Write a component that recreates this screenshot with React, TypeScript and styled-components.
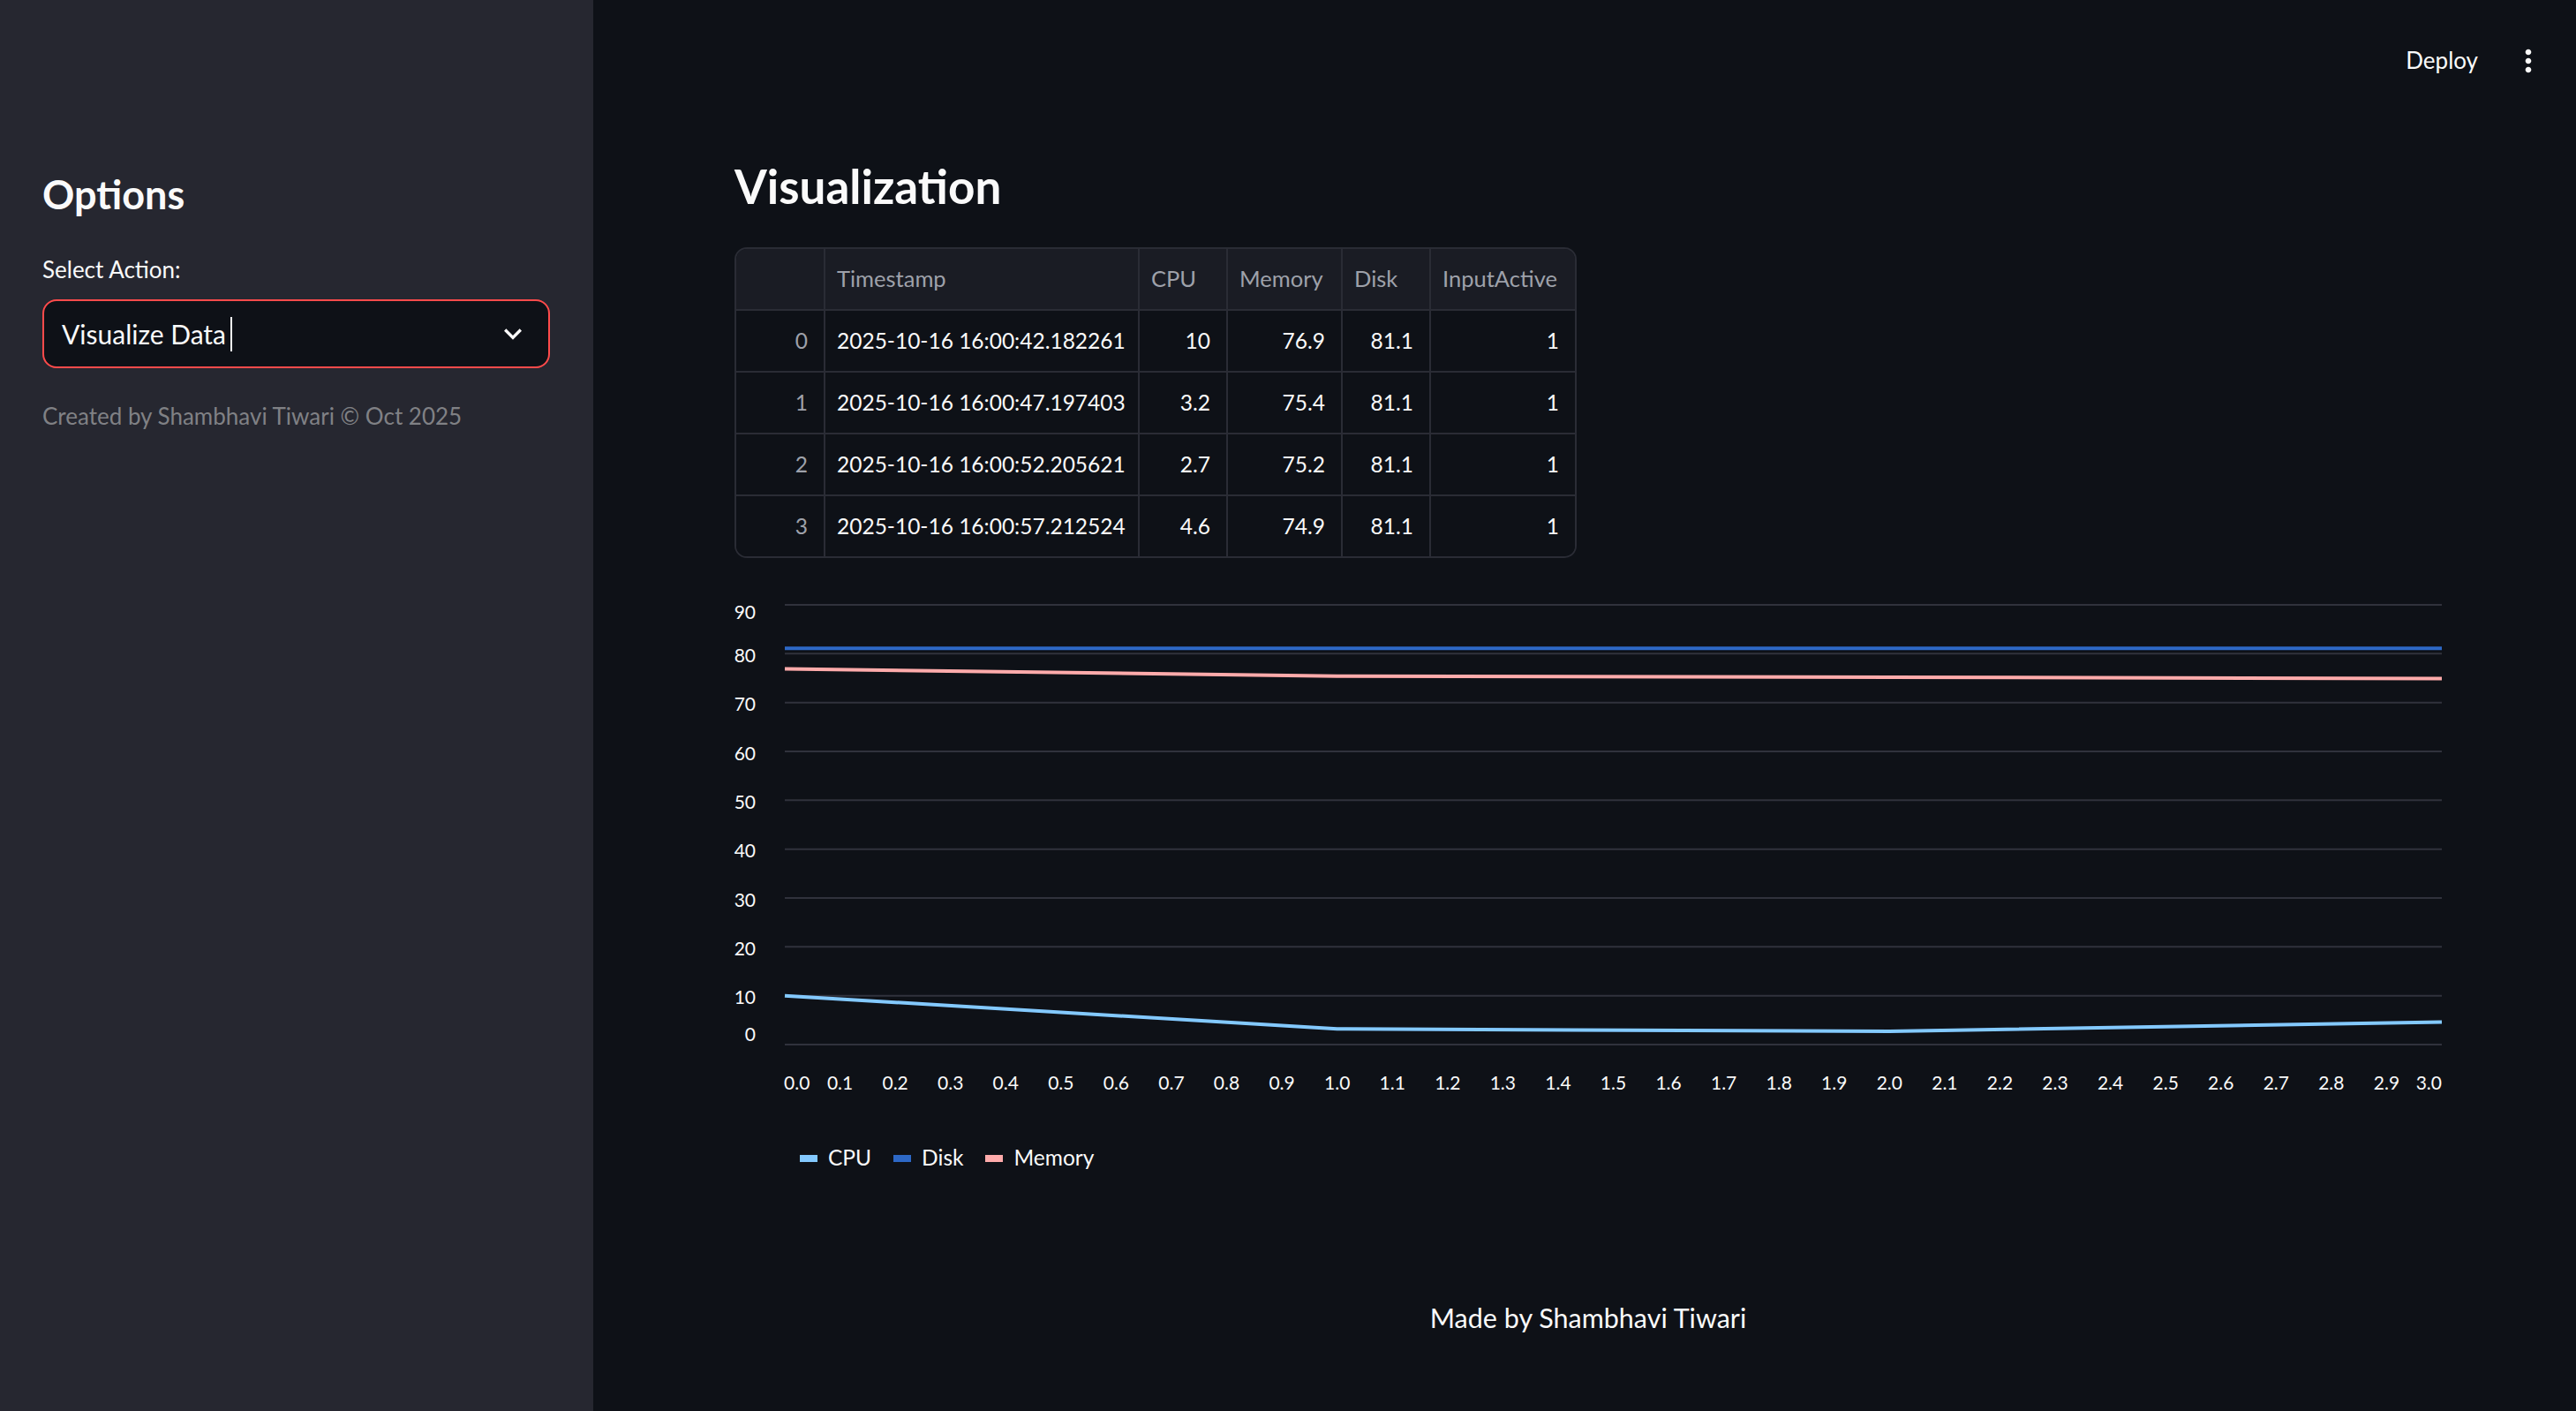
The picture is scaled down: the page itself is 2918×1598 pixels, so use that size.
import React from "react";
import styled, { createGlobalStyle } from "styled-components";

const GlobalStyle = createGlobalStyle`
  html, body {
    margin: 0;
    padding: 0;
    background: #0e1117;
    color: #fafafa;
    font-family: "Lato", "Noto Sans", sans-serif;
  }
  * { box-sizing: border-box; }
`;

const Shell = styled.div`
  display: flex;
  min-height: 100vh;
  width: 100%;
`;

const Sidebar = styled.aside`
  width: 672px;
  flex: 0 0 672px;
  background: #262730;
  padding: 193px 48px 0 48px;
  display: flex;
  flex-direction: column;
`;

const SidebarTitle = styled.h2`
  margin: 0;
  font-size: 45px;
  line-height: 1.2;
  font-weight: 700;
  color: #fafafa;
`;

const FieldLabel = styled.label`
  margin-top: 43px;
  font-size: 26px;
  line-height: 1.2;
  color: #fafafa;
`;

const SelectBox = styled.div`
  margin-top: 18px;
  height: 78px;
  width: 575px;
  border: 2px solid #ff4b4b;
  border-radius: 16px;
  background: #0e1117;
  display: flex;
  align-items: center;
  padding: 0 20px 0 20px;
`;

const SelectValue = styled.span`
  font-size: 30px;
  line-height: 1.2;
  color: #fafafa;
`;

const Caret = styled.span`
  display: inline-block;
  width: 2px;
  height: 39px;
  margin-left: 5px;
  background: #fafafa;
`;

const Spacer = styled.div`
  flex: 1;
`;

const Caption = styled.p`
  margin: 39px 0 0 0;
  font-size: 26px;
  line-height: 1.2;
  color: #808185;
`;

const Main = styled.main`
  flex: 1;
  display: flex;
  flex-direction: column;
  min-width: 0;
`;

const TopBar = styled.header`
  height: 137px;
  display: flex;
  justify-content: flex-end;
  align-items: center;
  gap: 37px;
  padding-right: 34px;
`;

const DeployButton = styled.button`
  background: transparent;
  border: none;
  padding: 0;
  color: #fafafa;
  font-family: inherit;
  font-size: 26px;
  line-height: 1.2;
`;

const IconButton = styled.button`
  background: transparent;
  border: none;
  padding: 0;
  width: 40px;
  height: 40px;
  display: flex;
  align-items: center;
  justify-content: center;
  color: #fafafa;
`;

const Content = styled.section`
  padding: 0 152px 0 160px;
  display: flex;
  flex-direction: column;
`;

const PageTitle = styled.h3`
  margin: 42px 0 0 0;
  font-size: 53px;
  line-height: 1.2;
  font-weight: 700;
  color: #fafafa;
`;

const TableFrame = styled.div`
  margin-top: 37px;
  align-self: flex-start;
  display: grid;
  grid-template-columns: 101px 356px 100px 130px 100px 163px;
  border: 2px solid #2a2c35;
  border-radius: 14px;
  overflow: hidden;
`;

const Cell = styled.div<{ $head?: boolean; $right?: boolean; $muted?: boolean; $lastCol?: boolean; $lastRow?: boolean }>`
  height: ${(p) => (p.$lastRow ? "68px" : "70px")};
  display: flex;
  align-items: center;
  justify-content: ${(p) => (p.$right ? "flex-end" : "flex-start")};
  padding: 0 18px 0 13px;
  font-size: ${(p) => (p.$head ? "25.5px" : "24.5px")};
  line-height: 1.2;
  white-space: nowrap;
  background: ${(p) => (p.$head ? "#1a1c24" : "#0e1117")};
  color: ${(p) => (p.$head || p.$muted ? "#9ea1aa" : "#fafafa")};
  border-right: ${(p) => (p.$lastCol ? "none" : "2px solid #2a2c35")};
  border-bottom: ${(p) => (p.$lastRow ? "none" : "2px solid #2a2c35")};
`;

const ChartSvg = styled.svg`
  display: block;
  margin-top: 29px;
  overflow: visible;
`;

const AxisText = styled.text`
  font-family: "Lato", "Noto Sans", sans-serif;
  font-size: 21px;
  fill: #fafafa;
`;

const Legend = styled.div`
  margin-top: 45px;
  padding-left: 74px;
  display: flex;
  align-items: center;
  gap: 25px;
`;

const LegendItem = styled.div`
  display: flex;
  align-items: center;
  gap: 12px;
  font-size: 24.5px;
  line-height: 1.2;
  color: #fafafa;
`;

const Swatch = styled.span<{ $color: string }>`
  display: inline-block;
  width: 20px;
  height: 8px;
  margin-top: 4px;
  background: ${(p) => p.$color};
`;

const Footer = styled.footer`
  margin-top: 149px;
  text-align: center;
  font-size: 30.5px;
  line-height: 1.2;
  color: #fafafa;
`;

const rows = [
  { i: "0", ts: "2025-10-16 16:00:42.182261", cpu: "10", mem: "76.9", disk: "81.1", ia: "1" },
  { i: "1", ts: "2025-10-16 16:00:47.197403", cpu: "3.2", mem: "75.4", disk: "81.1", ia: "1" },
  { i: "2", ts: "2025-10-16 16:00:52.205621", cpu: "2.7", mem: "75.2", disk: "81.1", ia: "1" },
  { i: "3", ts: "2025-10-16 16:00:57.212524", cpu: "4.6", mem: "74.9", disk: "81.1", ia: "1" },
];

const headers = ["", "Timestamp", "CPU", "Memory", "Disk", "InputActive"];

const W = 1934;
const H = 590;
const X0 = 57;
const X1 = 1934;
const Y90 = 24;
const Y0 = 522;
const yOf = (v: number) => Y0 - (v * (Y0 - Y90)) / 90;
const xOf = (t: number) => X0 + (t * (X1 - X0)) / 3;

const series = [
  { name: "CPU", color: "#83c9ff", values: [10, 3.2, 2.7, 4.6] },
  { name: "Disk", color: "#2d68c6", values: [81.1, 81.1, 81.1, 81.1] },
  { name: "Memory", color: "#ffabab", values: [76.9, 75.4, 75.2, 74.9] },
];

const yTicks = [90, 80, 70, 60, 50, 40, 30, 20, 10, 0];
const xTicks = Array.from({ length: 31 }, (_, k) => k / 10);

function Chart() {
  return (
    <ChartSvg width={W} height={H} viewBox={`0 0 ${W} ${H}`}>
      {yTicks.map((v) => (
        <line key={`g${v}`} x1={X0} x2={X1} y1={yOf(v)} y2={yOf(v)} stroke="#30323c" strokeWidth={2} />
      ))}
      {yTicks.map((v) => {
        const y = yOf(v);
        const base = v === 90 ? y + 16 : v === 0 ? y - 4 : y + 9.5;
        return (
          <AxisText key={`y${v}`} x={24} y={base} textAnchor="end">
            {v}
          </AxisText>
        );
      })}
      {xTicks.map((t, k) => (
        <AxisText
          key={`x${k}`}
          x={k === 0 ? X0 - 1 : k === 30 ? X1 : xOf(t)}
          y={573}
          textAnchor={k === 0 ? "start" : k === 30 ? "end" : "middle"}
        >
          {t.toFixed(1)}
        </AxisText>
      ))}
      {series.map((s) => (
        <polyline
          key={s.name}
          fill="none"
          stroke={s.color}
          strokeWidth={4}
          points={s.values.map((v, k) => `${xOf(k)},${yOf(v)}`).join(" ")}
        />
      ))}
    </ChartSvg>
  );
}

export default function App() {
  return (
    <>
      <GlobalStyle />
      <Shell>
        <Sidebar>
          <SidebarTitle>Options</SidebarTitle>
          <FieldLabel>Select Action:</FieldLabel>
          <SelectBox>
            <SelectValue>Visualize Data</SelectValue>
            <Caret />
            <Spacer />
            <svg width="40" height="40" viewBox="0 0 24 24" fill="#fafafa">
              <path d="M16.59 8.59L12 13.17 7.41 8.59 6 10l6 6 6-6z" />
            </svg>
          </SelectBox>
          <Caption>Created by Shambhavi Tiwari © Oct 2025</Caption>
        </Sidebar>
        <Main>
          <TopBar>
            <DeployButton>Deploy</DeployButton>
            <IconButton aria-label="menu">
              <svg width="40" height="40" viewBox="0 0 24 24" fill="#fafafa">
                <path d="M12 8c1.1 0 2-.9 2-2s-.9-2-2-2-2 .9-2 2 .9 2 2 2zm0 2c-1.1 0-2 .9-2 2s.9 2 2 2 2-.9 2-2-.9-2-2-2zm0 6c-1.1 0-2 .9-2 2s.9 2 2 2 2-.9 2-2-.9-2-2-2z" />
              </svg>
            </IconButton>
          </TopBar>
          <Content>
            <PageTitle>Visualization</PageTitle>
            <TableFrame>
              {headers.map((h, c) => (
                <Cell key={`h${c}`} $head $lastCol={c === headers.length - 1}>
                  {h}
                </Cell>
              ))}
              {rows.map((r, ri) => {
                const last = ri === rows.length - 1;
                const vals = [r.i, r.ts, r.cpu, r.mem, r.disk, r.ia];
                return vals.map((v, c) => (
                  <Cell
                    key={`r${ri}c${c}`}
                    $right={c !== 1}
                    $muted={c === 0}
                    $lastCol={c === vals.length - 1}
                    $lastRow={last}
                  >
                    {v}
                  </Cell>
                ));
              })}
            </TableFrame>
            <Chart />
            <Legend>
              {series.map((s) => (
                <LegendItem key={s.name}>
                  <Swatch $color={s.color} />
                  {s.name}
                </LegendItem>
              ))}
            </Legend>
            <Footer>Made by Shambhavi Tiwari</Footer>
          </Content>
        </Main>
      </Shell>
    </>
  );
}
